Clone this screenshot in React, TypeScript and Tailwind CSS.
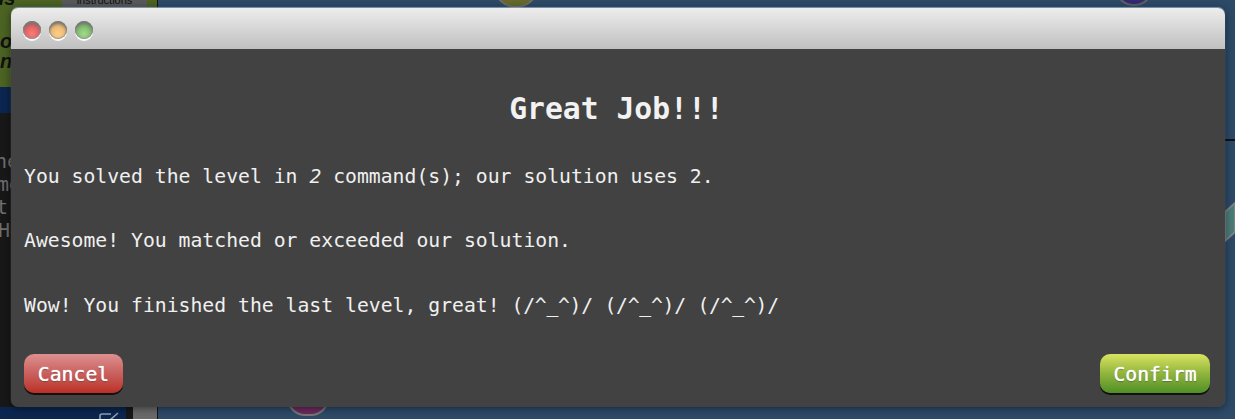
export default function App() {
  const mono = "font-['DejaVu_Sans_Mono','Liberation_Mono',monospace]";
  const dot = "h-[18px] w-[18px] rounded-full shadow-[0_2px_0_#fff,inset_0_3px_3px_#777,inset_0_0_1px_1px_#999]";
  return (
    <div className="relative h-[419px] w-[1235px] overflow-hidden bg-[#2d4a68]">
      {/* dimmed page behind the dialog */}
      <div className="absolute inset-y-0 left-0 flex h-full w-[157px] flex-col bg-[#181818] font-['Liberation_Sans',sans-serif] text-[#6f6f6f]">
        <div className="relative h-[87px] shrink-0 overflow-hidden bg-[#4c6323] text-[#111] italic font-bold text-[20px] leading-none">
          <span className="absolute left-[-8px] top-[-12px]">us</span>
          <span className="absolute left-0 top-[31px]">o</span>
          <span className="absolute left-0 top-[51px]">n</span>
          <div className="absolute left-[62px] top-[-8px] h-[16px] w-[85px] bg-[#58595a] text-center text-[11px] font-normal not-italic leading-[16px]">instructions</div>
        </div>
        <div className="h-[26px] shrink-0 bg-[#0b2650]" />
        <div className={`flex flex-1 flex-col pt-[37px] text-[20px] leading-[23px] ${mono}`}>
          <span className="-ml-[5px]">he</span>
          <span className="-ml-[3px]">me</span>
          <span className="-ml-[4px]">t</span>
          <span className="-ml-[2px]">He</span>
        </div>
        <div className="flex h-[12px] shrink-0">
          <div className="relative w-[126px] bg-[#0b2650]">
            <svg className="absolute left-[98px] top-[5px] h-[14px] w-[22px] text-[#8ea0b8]" viewBox="0 0 22 14" fill="none" stroke="currentColor" strokeWidth="1.6">
              <path d="M13 2H4a2 2 0 0 0-2 2v10M20 1l-8 7" />
            </svg>
          </div>
          <div className="w-[7px] bg-[#181818]" />
          <div className="w-[24px] bg-[#6a6a6a]" />
        </div>
      </div>
      <div className="absolute bottom-0 left-[157px] top-0 w-[1px] bg-[#151515]" />
      <div className="absolute left-[493px] top-[-38px] h-[46px] w-[46px] rounded-full border-[2px] border-[#6e6e60] bg-[#676a2c]" />
      <div className="absolute left-[1114px] top-[-40px] h-[46px] w-[40px] rounded-full border-[2px] border-[#5f5f66] bg-[#322a72]" />
      <div className="absolute left-[287px] top-[380px] h-[36px] w-[42px] rounded-full border-[2px] border-[#777] bg-[#6d2a5f]" />
      <div className="absolute left-[1225px] top-[139px] h-[2px] w-[10px] bg-[#111]" />
      <svg className="absolute left-[1225px] top-[200px] h-[44px] w-[10px]" viewBox="0 0 10 44">
        <polygon points="0,12 10,3 10,32 0,41" fill="#4c7d79" stroke="#7d8488" strokeWidth="2" />
      </svg>

      {/* dialog */}
      <div className={`relative ml-[10.5px] mt-[8px] flex h-[399px] w-[1214px] flex-col overflow-hidden rounded-[7px] shadow-[0_-1px_1px_rgba(160,190,220,0.7),0_1px_8px_rgba(0,0,0,0.5)] ${mono}`}>
        <div className="flex h-[41px] shrink-0 items-center gap-[8px] bg-gradient-to-b from-[#ededed] to-[#c0c0c0] pl-[12.5px] pt-[3px]">
          <span className={`bg-[radial-gradient(circle_at_50%_70%,#f58080,#dd4f4f_70%)] ${dot}`} />
          <span className={`bg-[radial-gradient(circle_at_50%_70%,#fbcf8d,#e8ae62_70%)] ${dot}`} />
          <span className={`bg-[radial-gradient(circle_at_50%_70%,#a3d98e,#6fae5b_70%)] ${dot}`} />
        </div>
        <div className="flex flex-1 flex-col bg-[#424242] pl-[13.5px] pr-[14.5px] text-[19.76px] leading-[24px] text-[#f0f0f0]">
          <h1 className="mr-[1px] mt-[42px] text-center text-[29.7px] font-bold leading-[36px] text-[#f2f2f2]">Great Job!!!</h1>
          <p className="mt-[38px]">You solved the level in <em>2</em> command(s); our solution uses 2.</p>
          <p className="mt-[40px]">Awesome! You matched or exceeded our solution.</p>
          <p className="mt-[41px]">Wow! You finished the last level, great! <span className="tracking-[-0.27px]">(/^_^)/ (/^_^)/ (/^_^)/</span></p>
          <div className="mb-[14px] mt-auto flex items-center justify-between">
            <button className="h-[39px] w-[99px] rounded-[10px] bg-gradient-to-b from-[#dc9090] via-[#c9605e] to-[#bb2e24] pt-[2px] text-white shadow-[0_2px_0_#111] [text-shadow:0_0_1px_#fff,0_1px_1px_rgba(0,0,0,0.4)]">Cancel</button>
            <button className="h-[39px] w-[110px] rounded-[10px] bg-gradient-to-b from-[#d9e360] via-[#90b53d] to-[#4f8f26] pt-[2px] text-white shadow-[0_2px_0_#111] [text-shadow:0_0_1px_#fff,0_1px_1px_rgba(0,0,0,0.4)]">Confirm</button>
          </div>
        </div>
      </div>
    </div>
  );
}
